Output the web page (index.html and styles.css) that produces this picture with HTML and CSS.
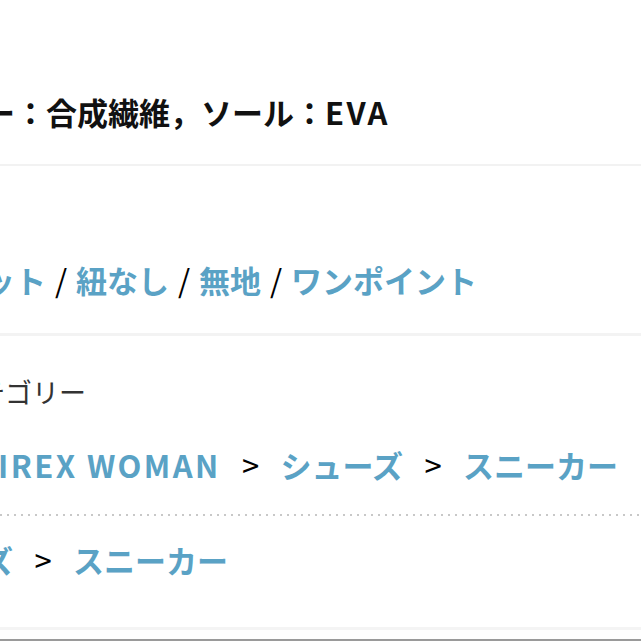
FILE: index.html
```html
<!doctype html>
<html lang="ja">
  <head>
    <meta charset="UTF-8" />
    <meta name="viewport" content="width=device-width, initial-scale=1.0" />
    <title>商品詳細</title>
    <link rel="stylesheet" href="styles.css">
  </head>
  <body>
    <div class="detail">
      <section class="block block-material">
        <p class="value text shift-material">ー：合成繊維，ソール：<span class="latin">EVA</span></p>
      </section>

      <section class="block block-feature">
        <p class="value shift-feature">
          <a href="#">ット</a><span class="sep">/</span><a href="#">紐なし</a><span class="sep">/</span><a href="#">無地</a><span class="sep">/</span><a href="#">ワンポイント</a>
        </p>
      </section>

      <section class="block block-category">
        <h2 class="label shift-label">テゴリー</h2>
        <p class="value shift-brand">
          <a href="#" class="latin">IREX WOMAN</a><span class="arrow">&gt;</span><a href="#">シューズ</a><span class="arrow">&gt;</span><a href="#">スニーカー</a>
        </p>
        <div class="dots"></div>
        <p class="value shift-path">
          <a href="#">ズ</a><span class="arrow">&gt;</span><a href="#">スニーカー</a>
        </p>
      </section>

      <div class="band"></div>
    </div>
  </body>
</html>
```

FILE: styles.css
```css
body {
  margin: 0;
  background: #fff;
  font-family: "Noto Sans CJK JP", "Noto Sans", sans-serif;
  color: #111;
  overflow: hidden;
}

.detail {
  width: 641px;
  height: 641px;
  overflow: hidden;
  border-bottom: 2px solid #9a9a9a;
  box-sizing: border-box;
}

.block {
  margin: 0;
}

.block-material {
  padding: 90px 0 30px;
  border-bottom: 2px solid #f2f2f2;
}

.block-feature {
  padding: 92px 0 31px;
  border-bottom: 3px solid #f3f3f3;
}

.block-category {
  padding: 38px 0 45px;
}

.value {
  margin: 0;
  font-size: 31px;
  line-height: 44px;
  font-weight: 700;
  white-space: nowrap;
}

.value a {
  color: #5aa2c5;
  text-decoration: none;
}

.value.text {
  color: #111;
}

.latin {
  letter-spacing: 2.4px;
}

.label {
  margin: 0 0 33px;
  font-size: 27px;
  line-height: 36px;
  font-weight: 400;
  color: #333;
  white-space: nowrap;
}

.sep {
  display: inline-block;
  width: 30px;
  text-align: center;
  font-weight: 400;
  color: #000;
}

.arrow {
  display: inline-block;
  width: 60px;
  text-align: center;
  font-weight: 400;
  color: #000;
}

.dots {
  height: 2px;
  margin: 27px 0 22px;
  background-image: linear-gradient(to right, #c8c8c8 2px, transparent 2px);
  background-size: 7px 2px;
}

.band {
  height: 3px;
  background: #f4f4f4;
}

/* 左端が切れている行のずらし */
.shift-material { margin-left: -16px; }
.shift-feature { margin-left: -16px; }
.shift-label { margin-left: -22px; }
.shift-brand { margin-left: -2px; }
.shift-path { margin-left: -18px; }
```
